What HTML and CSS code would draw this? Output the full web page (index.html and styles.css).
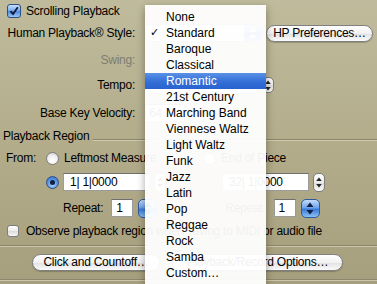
FILE: index.html
```html
<!DOCTYPE html>
<html lang="en">
<head>
<meta charset="UTF-8">
<meta name="viewport" content="width=device-width, initial-scale=1.0">
<title>Playback Options</title>
<link rel="stylesheet" href="styles.css">
</head>
<body>

<div class="dialog">
  <div class="row r-scroll">
    <span class="check on">
      <svg width="10" height="10" viewBox="0 0 10 10"><path d="M1.5 5.2 L4 8 L8.8 1.2" fill="none" stroke="#0d1a33" stroke-width="1.8"/></svg>
    </span>
    <span class="check-text">Scrolling Playback</span>
  </div>

  <div class="row r-style">
    <span class="lbl">Human Playback® Style:</span>
    <div class="popup">
      <span class="popup-text"></span>
      <span class="popup-arrows">
        <svg width="8" height="11" viewBox="0 0 8 11"><path d="M4 0 L7.5 4 H0.5 Z M4 11 L7.5 7 H0.5 Z" fill="#fff"/></svg>
      </span>
    </div>
    <button class="btn btn-hp">HP Preferences…</button>
  </div>

  <div class="row r-swing">
    <span class="lbl dim">Swing:</span>
  </div>

  <div class="row r-tempo">
    <span class="lbl">Tempo:</span>
    <div class="field tempo-field"></div>
    <span class="stepper">
      <svg width="6" height="11" viewBox="0 0 6 11"><path d="M3 0.5 L5.8 4 H0.2 Z M3 10.5 L5.8 7 H0.2 Z" fill="#222"/></svg>
    </span>
  </div>

  <div class="row r-velocity">
    <span class="lbl">Base Key Velocity:</span>
    <div class="field velocity-field">64</div>
  </div>

  <div class="row r-group">
    <span class="group-title">Playback Region</span>
    <div class="rule"></div>
  </div>

  <div class="row r-from">
    <span class="from-lbl">From:</span>
    <span class="radio"></span>
    <span class="opt-text opt-left">Leftmost Measure</span>
    <span class="radio"></span>
    <span class="opt-text">End of Piece</span>
  </div>

  <div class="row r-range">
    <span class="radio on"><span class="dot"></span></span>
    <div class="field range-field">1| 1|0000</div>
    <span class="stepper tall">
      <svg width="6" height="11" viewBox="0 0 6 11"><path d="M3 0.5 L5.8 4 H0.2 Z M3 10.5 L5.8 7 H0.2 Z" fill="#222"/></svg>
    </span>
    <div class="field range-field second">32| 1|0000</div>
    <span class="stepper tall">
      <svg width="6" height="11" viewBox="0 0 6 11"><path d="M3 0.5 L5.8 4 H0.2 Z M3 10.5 L5.8 7 H0.2 Z" fill="#222"/></svg>
    </span>
  </div>

  <div class="row r-repeat">
    <span class="repeat-lbl">Repeat:</span>
    <div class="field repeat-field">1</div>
    <span class="stepper blue">
      <svg width="8" height="13" viewBox="0 0 8 13"><path d="M4 0.5 L7.5 5 H0.5 Z M4 12.5 L7.5 8 H0.5 Z" fill="#10203d"/></svg>
    </span>
    <span class="repeat-lbl second">Repeat:</span>
    <div class="field repeat-field">1</div>
    <span class="stepper blue">
      <svg width="8" height="13" viewBox="0 0 8 13"><path d="M4 0.5 L7.5 5 H0.5 Z M4 12.5 L7.5 8 H0.5 Z" fill="#10203d"/></svg>
    </span>
  </div>

  <div class="row r-observe">
    <span class="check off"></span>
    <span class="check-text">Observe playback region when saving to MIDI or audio file</span>
  </div>

  <div class="sep sep-mid"></div>

  <div class="row r-buttons">
    <button class="btn btn-click">Click and Countoff…</button>
    <button class="btn btn-opts">Playback/Record Options…</button>
  </div>

  <div class="sep sep-bottom"></div>
</div>

<!-- popup menu of the style button, drawn over the dialog -->
<div class="menu">
  <div class="item"><span class="mark"></span>None</div>
  <div class="item"><span class="mark">✓</span>Standard</div>
  <div class="item"><span class="mark"></span>Baroque</div>
  <div class="item"><span class="mark"></span>Classical</div>
  <div class="item active"><span class="mark"></span>Romantic</div>
  <div class="item"><span class="mark"></span>21st Century</div>
  <div class="item"><span class="mark"></span>Marching Band</div>
  <div class="item"><span class="mark"></span>Viennese Waltz</div>
  <div class="item"><span class="mark"></span>Light Waltz</div>
  <div class="item"><span class="mark"></span>Funk</div>
  <div class="item"><span class="mark"></span>Jazz</div>
  <div class="item"><span class="mark"></span>Latin</div>
  <div class="item"><span class="mark"></span>Pop</div>
  <div class="item"><span class="mark"></span>Reggae</div>
  <div class="item"><span class="mark"></span>Rock</div>
  <div class="item"><span class="mark"></span>Samba</div>
  <div class="item"><span class="mark"></span>Custom…</div>
</div>

</body>
</html>
```

FILE: styles.css
```css
body {
  margin: 0;
  width: 377px;
  height: 284px;
  overflow: hidden;
  position: relative;
  font-family: "Liberation Sans", Arial, sans-serif;
  font-size: 12px;
  letter-spacing: -0.25px;
  color: #000;
  background: linear-gradient(180deg, #bfbb9c 0%, #b4ae8d 45%, #a69f7d 100%);
}
.dialog {
  display: flex;
  flex-direction: column;
}
.row {
  display: flex;
  align-items: center;
  height: 18px;
  flex-shrink: 0;
}

/* vertical rhythm */
.r-scroll { margin-top: 2px; padding-left: 7px; }
.r-style { margin-top: 4px; }
.r-swing { margin-top: 9px; }
.r-tempo { margin-top: 7px; }
.r-velocity { margin-top: 10px; }
.r-group { margin-top: 5px; padding-left: 3px; }
.r-from { margin-top: 4px; padding-left: 6px; }
.r-range { margin-top: 6px; padding-left: 46px; }
.r-repeat { margin-top: 8px; padding-left: 63px; }
.r-observe { margin-top: 5px; padding-left: 7px; }
.r-buttons { margin-top: 7px; }

.lbl {
  width: 135px;
  text-align: right;
  margin-right: 10px;
  flex-shrink: 0;
}
.lbl.dim { color: #7f7d72; }

/* checkboxes */
.check {
  box-sizing: border-box;
  display: flex;
  align-items: center;
  justify-content: center;
  border-radius: 3px;
  flex-shrink: 0;
}
.check.on {
  width: 14px;
  height: 14px;
  border: 1px solid #2e4f85;
  background: linear-gradient(180deg, #c9defa 0%, #7eaef0 45%, #4d8ae2 55%, #9cc6f7 100%);
}
.check.off {
  width: 12px;
  height: 12px;
  border: 1px solid #7d7d7d;
  background: linear-gradient(180deg, #ffffff 0%, #ececec 50%, #dcdcdc 55%, #f7f7f7 100%);
}
.check-text { margin-left: 5px; white-space: nowrap; }
.r-observe .check-text { margin-left: 7px; }

/* popup and buttons */
.popup {
  box-sizing: border-box;
  width: 117px;
  height: 18px;
  border: 1px solid #8a8a8a;
  border-radius: 5px;
  background: linear-gradient(180deg, #fff, #ededed 50%, #e0e0e0 55%, #fafafa);
  display: flex;
  align-items: center;
  overflow: hidden;
}
.popup-text { flex: 1; padding-left: 8px; }
.popup-arrows {
  width: 17px;
  height: 100%;
  display: flex;
  align-items: center;
  justify-content: center;
  background: linear-gradient(180deg, #a9cbf6, #4f8ce3 50%, #2f6fd6 55%, #7db2f2);
}
.btn {
  box-sizing: border-box;
  height: 17px;
  padding: 0;
  border: 1px solid #7f7f7f;
  border-radius: 9px;
  background: linear-gradient(180deg, #ffffff 0%, #f1f1f1 50%, #e3e3e3 55%, #fbfbfb 100%);
  font-family: inherit;
  font-size: 12px;
  letter-spacing: -0.25px;
  color: #000;
  white-space: nowrap;
  box-shadow: 0 1px 1px rgba(0, 0, 0, 0.2);
}
.btn-hp { width: 107px; margin-left: 4px; }
.btn-click { width: 128px; margin-left: 32px; }
.btn-opts { width: 171px; margin-left: auto; margin-right: 34px; }

/* text fields */
.field {
  box-sizing: border-box;
  height: 18px;
  background: #fff;
  border: 1px solid #9b9b9b;
  border-top-color: #6f6f6f;
  padding-left: 3px;
  line-height: 16px;
  flex-shrink: 0;
}
.tempo-field { width: 113px; }
.velocity-field { width: 40px; }
.range-field { width: 87px; margin-left: 4px; padding-left: 6px; }
.range-field.second { margin-left: 56px; }
.repeat-field { width: 22px; margin-left: 8px; padding-left: 4px; }

/* steppers */
.stepper {
  box-sizing: border-box;
  width: 12px;
  height: 16px;
  margin-left: 4px;
  border: 1px solid #7c7c7c;
  border-radius: 5px;
  background: linear-gradient(180deg, #fff, #ececec 50%, #dedede 55%, #f8f8f8);
  display: flex;
  align-items: center;
  justify-content: center;
  flex-shrink: 0;
}
.stepper.tall { height: 19px; }
.stepper.blue {
  width: 19px;
  height: 19px;
  margin-left: 5px;
  border-color: #2f5a9a;
  background: linear-gradient(180deg, #c3dcfb 0%, #6fa3ec 45%, #3a7ad9 55%, #8cc0f6 100%);
}

/* playback region group */
.group-title { white-space: nowrap; }
.rule {
  flex: 1;
  height: 1px;
  margin-left: 4px;
  margin-top: 6px;
  background: #8c866b;
  box-shadow: 0 1px 0 #cfcaae;
}
.from-lbl { width: 31px; margin-right: 9px; }
.radio {
  box-sizing: border-box;
  width: 13px;
  height: 13px;
  border-radius: 50%;
  border: 1px solid #7d7d7d;
  background: radial-gradient(circle at 50% 70%, #ffffff 0%, #f2f2f2 45%, #cfcfcf 100%);
  flex-shrink: 0;
  display: flex;
  align-items: center;
  justify-content: center;
}
.radio.on {
  border-color: #2b4f8a;
  background: radial-gradient(circle at 50% 70%, #b4d4fb 0%, #5d97e6 50%, #2e68c8 100%);
}
.radio .dot {
  width: 5px;
  height: 5px;
  border-radius: 50%;
  background: #11213d;
}
.opt-text { margin-left: 5px; white-space: nowrap; }
.opt-left { width: 139px; overflow: hidden; }
.repeat-lbl { white-space: nowrap; }
.repeat-lbl.second { margin-left: 68px; }

.sep {
  height: 1px;
  background: #8c866b;
  box-shadow: 0 1px 0 #cbc6aa;
  flex-shrink: 0;
}
.sep-mid { margin-top: 5px; }
.sep-bottom { margin-top: 8px; }

/* popup menu */
.menu {
  position: absolute;
  left: 145px;
  top: 5px;
  width: 121px;
  height: 279px;
  overflow: hidden;
  padding-top: 4px;
  box-sizing: border-box;
  background: rgba(255, 255, 255, 0.945);
  box-shadow: 0 3px 8px rgba(0, 0, 0, 0.35);
  letter-spacing: 0;
}
.item {
  height: 16px;
  line-height: 16px;
  display: flex;
  align-items: center;
  white-space: nowrap;
}
.item .mark {
  width: 16px;
  margin-left: 5px;
  font-family: "DejaVu Sans", sans-serif;
  font-size: 11px;
}
.item.active {
  color: #fff;
  background: linear-gradient(180deg, #5b92e6 0%, #3571d8 50%, #2962cf 100%);
}
```
